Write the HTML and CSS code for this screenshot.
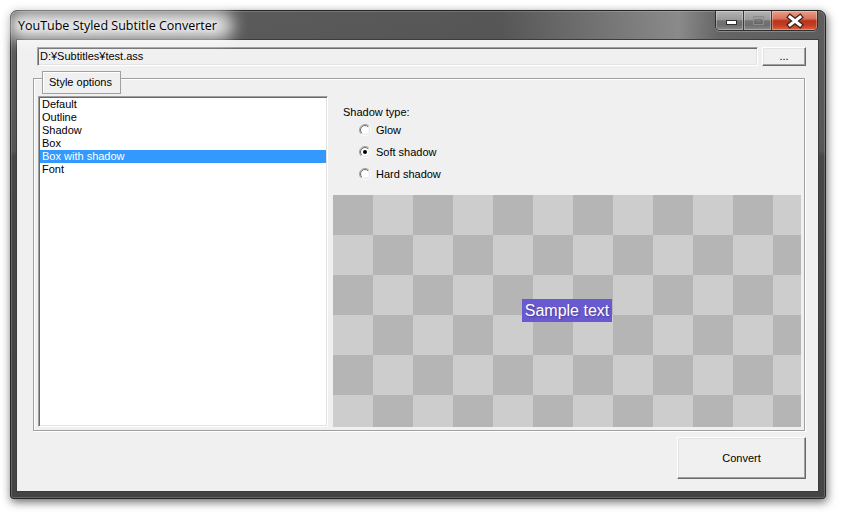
FILE: index.html
```html
<!DOCTYPE html>
<html>
<head>
<meta charset="utf-8">
<link rel="stylesheet" href="styles.css">
</head>
<body>
<div class="window">
  <div class="titlebar">
    <div class="title">YouTube Styled Subtitle Converter</div>
    <div class="caption-buttons">
      <div class="cb cb-min">
        <svg width="28" height="19" viewBox="0 0 28 19"><rect x="10.5" y="9.5" width="10" height="4" fill="#fff" stroke="#2e2e2e"/></svg>
      </div>
      <div class="cb cb-max">
        <svg width="27" height="19" viewBox="0 0 27 19"><rect x="9.5" y="5.5" width="10" height="8" fill="none" stroke="#8c8c8c"/><rect x="10" y="6" width="9" height="2" fill="#9a9a9a"/><rect x="11.5" y="8.5" width="6" height="4" fill="none" stroke="#5f5f5f" stroke-opacity=".6"/></svg>
      </div>
      <div class="cb cb-close">
        <svg width="44" height="19" viewBox="0 0 44 19"><path d="M18 6 L28 14 M28 6 L18 14" stroke="#3b2420" stroke-width="5.5" stroke-linecap="square" fill="none"/><path d="M18 6 L28 14 M28 6 L18 14" stroke="#fff" stroke-width="3" stroke-linecap="square" fill="none"/></svg>
      </div>
    </div>
  </div>
  <div class="client">
    <div class="path-row">
      <div class="textbox">D:¥Subtitles¥test.ass</div>
      <div class="button btn-browse">...</div>
    </div>
    <div class="groupbox">
      <div class="group-label">Style options</div>
      <div class="listbox">
        <div class="item">Default</div>
        <div class="item">Outline</div>
        <div class="item">Shadow</div>
        <div class="item">Box</div>
        <div class="item selected">Box with shadow</div>
        <div class="item">Font</div>
      </div>
      <div class="options">
        <div class="shadow-label">Shadow type:</div>
        <div class="radio">
          <svg class="radio-icon" width="12" height="12" viewBox="0 0 12 12"><defs><linearGradient id="ro" x1="0" y1="0" x2="1" y2="1"><stop offset="0.45" stop-color="#a0a0a0"/><stop offset="0.55" stop-color="#ffffff"/></linearGradient><linearGradient id="ri" x1="0" y1="0" x2="1" y2="1"><stop offset="0.45" stop-color="#696969"/><stop offset="0.55" stop-color="#e3e3e3"/></linearGradient></defs><circle cx="6" cy="6" r="5.5" fill="none" stroke="url(#ro)"/><circle cx="6" cy="6" r="4.5" fill="#fff" stroke="url(#ri)"/></svg>
          <span>Glow</span>
        </div>
        <div class="radio">
          <svg class="radio-icon" width="12" height="12" viewBox="0 0 12 12"><circle cx="6" cy="6" r="5.5" fill="none" stroke="url(#ro)"/><circle cx="6" cy="6" r="4.5" fill="#fff" stroke="url(#ri)"/><circle cx="6" cy="6" r="2" fill="#000"/></svg>
          <span>Soft shadow</span>
        </div>
        <div class="radio">
          <svg class="radio-icon" width="12" height="12" viewBox="0 0 12 12"><circle cx="6" cy="6" r="5.5" fill="none" stroke="url(#ro)"/><circle cx="6" cy="6" r="4.5" fill="#fff" stroke="url(#ri)"/></svg>
          <span>Hard shadow</span>
        </div>
        <div class="preview">
          <div class="sample">Sample text</div>
        </div>
      </div>
    </div>
    <div class="bottom-row">
      <div class="button btn-convert">Convert</div>
    </div>
  </div>
</div>
</body>
</html>
```

FILE: styles.css
```css
* { box-sizing: border-box; }
html, body { margin: 0; }
body {
  width: 843px;
  height: 515px;
  background: #fff;
  padding: 10px 0 0 10px;
  font-family: "Liberation Sans", Arial, sans-serif;
  font-size: 11px;
  color: #000;
  overflow: hidden;
}
.window {
  width: 816px;
  height: 489px;
  border: 1px solid #262626;
  border-radius: 7px 7px 3px 3px;
  padding: 0 6px 6px 5px;
  background: linear-gradient(to bottom, #5e5e5e 0, #565656 140px, #474747 145px, #444 100%);
  box-shadow: 1px 3px 10px rgba(0,0,0,.6), inset 0 0 0 1px rgba(255,255,255,.18);
  display: flex;
  flex-direction: column;
}
.titlebar {
  height: 28px;
  margin: 0 -6px 0 -5px;
  padding: 0 7px;
  display: flex;
  justify-content: space-between;
  border-radius: 6px 6px 0 0;
  background: linear-gradient(to right, rgba(0,0,0,0) 0%, rgba(0,0,0,.08) 60%, rgba(255,255,255,.28) 82%, rgba(255,255,255,.05) 87%, rgba(0,0,0,0) 100%);
}
.title {
  align-self: center;
  position: relative;
  z-index: 0;
  font-family: "Open Sans", "Liberation Sans", sans-serif;
  font-size: 12.5px;
  color: #000;
  margin-top: 1px;
  text-shadow: 0 0 5px #fff, 0 0 8px #fff;
}
.title::before {
  content: "";
  position: absolute;
  left: -10px;
  right: -16px;
  top: -6px;
  bottom: -6px;
  background: rgba(255,255,255,.82);
  filter: blur(8px);
  border-radius: 14px;
  z-index: -1;
}
.caption-buttons {
  display: flex;
  height: 20px;
  border: 1px solid #2e2e2e;
  border-top: none;
  border-radius: 0 0 5px 5px;
  overflow: hidden;
  box-shadow: 0 1px 0 rgba(255,255,255,.25);
}
.cb { height: 19px; }
.cb svg { display: block; }
.cb-min, .cb-max {
  width: 28px;
  border-right: 1px solid #3a3a3a;
  background: linear-gradient(to bottom, #b4b4b4 0%, #9a9a9a 45%, #727272 52%, #6e6e6e 75%, #8a8a8a 100%);
  box-shadow: inset 0 0 0 1px rgba(255,255,255,.3);
}
.cb-max { width: 28px; }
.cb-close {
  width: 45px;
  background: linear-gradient(to bottom, #e9a08c 0%, #d9735a 40%, #b9331c 52%, #c23e22 75%, #e0643e 100%);
  box-shadow: inset 0 0 0 1px rgba(255,255,255,.3);
}
.client {
  flex: 1;
  border: 1px solid #3c3c3c;
  background: #f0f0f0;
  display: flex;
  flex-direction: column;
}
.path-row {
  display: flex;
  gap: 4px;
  margin: 7px 0 0 20px;
}
.textbox {
  width: 721px;
  height: 19px;
  border: 1px solid;
  border-color: #a0a0a0 #fff #fff #a0a0a0;
  box-shadow: inset 1px 1px 0 #696969, inset -1px -1px 0 #e3e3e3;
  padding: 0 0 0 2px;
  line-height: 17px;
  background: #f0f0f0;
}
.button {
  border: 1px solid;
  border-color: #fff #696969 #696969 #fff;
  box-shadow: inset -1px -1px 0 #a0a0a0, inset 1px 1px 0 #e3e3e3;
  background: #f0f0f0;
  display: flex;
  align-items: center;
  justify-content: center;
}
.btn-browse {
  width: 44px;
  height: 19px;
  padding-bottom: 1px;
}
.groupbox {
  position: relative;
  margin: 12px 0 0 16px;
  width: 772px;
  height: 353px;
  border: 1px solid #a0a0a0;
  box-shadow: inset 1px 1px 0 #fff, 1px 1px 0 #fff;
  padding: 17px 3px 3px 4px;
  display: flex;
  gap: 5px;
}
.group-label {
  position: absolute;
  left: 8px;
  top: -8px;
  width: 79px;
  height: 23px;
  border: 1px solid #a0a0a0;
  box-shadow: inset 1px 1px 0 #fff;
  background: #f0f0f0;
  padding-left: 6px;
  line-height: 21px;
}
.listbox {
  width: 290px;
  height: 331px;
  background: #fff;
  border: 1px solid;
  border-color: #a0a0a0 #fff #fff #a0a0a0;
  box-shadow: inset 1px 1px 0 #696969, inset -1px -1px 0 #e3e3e3;
  padding: 1px;
}
.item {
  height: 13px;
  line-height: 13px;
  padding-left: 2px;
}
.item.selected {
  background: #3399ff;
  color: #fff;
}
.options {
  width: 468px;
  display: flex;
  flex-direction: column;
}
.shadow-label {
  margin: 10px 0 0 10px;
  line-height: 13px;
  height: 13px;
}
.radio {
  height: 22px;
  display: flex;
  align-items: center;
  gap: 5px;
  padding-left: 26px;
}
.radio-icon { display: block; }
.preview {
  margin-top: 10px;
  height: 232px;
  background: repeating-conic-gradient(#cdcdcd 0 25%, #b5b5b5 0 50%) 0 0 / 80px 80px;
  display: flex;
  align-items: center;
  justify-content: center;
}
.sample {
  background: #6a5ad2;
  color: #fff;
  font-size: 16px;
  height: 23px;
  line-height: 23px;
  padding: 0 3px;
  margin-top: -1px;
  text-shadow: 1px 1px 2px rgba(0,0,0,.35);
}
.bottom-row {
  display: flex;
  justify-content: flex-end;
  margin-top: 6px;
  padding-right: 12px;
}
.btn-convert {
  width: 129px;
  height: 42px;
}
```
